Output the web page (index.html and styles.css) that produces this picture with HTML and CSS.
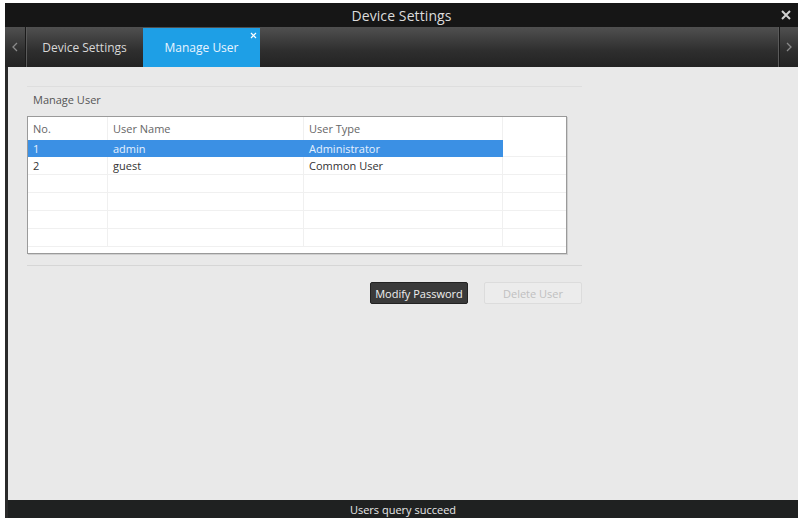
FILE: index.html
```html
<!DOCTYPE html>
<html>
<head>
<meta charset="utf-8">
<link rel="stylesheet" href="styles.css">
</head>
<body>
<div class="window">
  <div class="titlebar">
    <span class="title">Device Settings</span>
    <span class="close">
      <svg width="10" height="10" viewBox="0 0 10 10"><path d="M1 1L9 9M9 1L1 9" stroke="#d0d0d0" stroke-width="2"/></svg>
    </span>
  </div>
  <div class="tabbar">
    <div class="arrow left">
      <svg width="6" height="10" viewBox="0 0 6 10"><path d="M5 1L1 5L5 9" stroke="#8a8a8a" stroke-width="1.3" fill="none"/></svg>
    </div>
    <div class="tab">Device Settings</div>
    <div class="tab active">Manage User
      <span class="tabclose"><svg width="7" height="7" viewBox="0 0 7 7"><path d="M1 1L6 6M6 1L1 6" stroke="#fff" stroke-width="1.2"/></svg></span>
    </div>
    <div class="spacer"></div>
    <div class="arrow right">
      <svg width="6" height="10" viewBox="0 0 6 10"><path d="M1 1L5 5L1 9" stroke="#8a8a8a" stroke-width="1.3" fill="none"/></svg>
    </div>
  </div>
  <div class="content">
    <div class="group">
      <div class="group-label">Manage User</div>
      <div class="table">
        <div class="row head">
          <div class="cell c1">No.</div><div class="cell c2">User Name</div><div class="cell c3">User Type</div><div class="cell c4"></div>
        </div>
        <div class="row selected">
          <div class="cell c1">1</div><div class="cell c2">admin</div><div class="cell c3">Administrator</div><div class="cell c4"></div>
        </div>
        <div class="row strong">
          <div class="cell c1">2</div><div class="cell c2">guest</div><div class="cell c3">Common User</div><div class="cell c4"></div>
        </div>
        <div class="row"><div class="cell c1"></div><div class="cell c2"></div><div class="cell c3"></div><div class="cell c4"></div></div>
        <div class="row"><div class="cell c1"></div><div class="cell c2"></div><div class="cell c3"></div><div class="cell c4"></div></div>
        <div class="row"><div class="cell c1"></div><div class="cell c2"></div><div class="cell c3"></div><div class="cell c4"></div></div>
        <div class="row"><div class="cell c1"></div><div class="cell c2"></div><div class="cell c3"></div><div class="cell c4"></div></div>
      </div>
    </div>
    <div class="buttons">
      <button class="btn primary">Modify Password</button>
      <button class="btn disabled">Delete User</button>
    </div>
  </div>
  <div class="statusbar">Users query succeed</div>
</div>
</body>
</html>
```
FILE: styles.css
```css
html, body {
  margin: 0;
  padding: 0;
  background: #ffffff;
  overflow: hidden;
}
body {
  width: 798px;
  height: 518px;
}
.window {
  margin: 3px 0 0 5px;
  width: 793px;
  height: 515px;
  display: flex;
  flex-direction: column;
  font-family: "Open Sans", "Liberation Sans", sans-serif;
}
.titlebar {
  height: 24px;
  flex: none;
  background: #161616;
  display: flex;
  align-items: center;
  justify-content: center;
  position: relative;
}
.title {
  color: #dcdcdc;
  font-size: 14px;
  letter-spacing: 0.1px;
}
.close {
  position: absolute;
  right: 7px;
  top: 7px;
  line-height: 0;
}
.tabbar {
  height: 40px;
  flex: none;
  display: flex;
  background: linear-gradient(#505050, #2e2e2e 60%, #232323);
}
.arrow {
  display: flex;
  align-items: center;
  justify-content: center;
}
.arrow.left {
  width: 20px;
  border-right: 1px solid #1a1a1a;
  box-shadow: 1px 0 0 #5a5a5a;
}
.arrow.right {
  width: 18px;
  border-left: 1px solid #1a1a1a;
  box-shadow: -1px 0 0 #5a5a5a;
}
.spacer { flex: 1; }
.tab {
  width: 117px;
  display: flex;
  align-items: center;
  justify-content: center;
  font-size: 12px;
  color: #d8d8d8;
  position: relative;
}
.tab.active {
  background: #1e9fe6;
  color: #e8f4ff;
  margin-top: 1px;
}
.tabclose {
  position: absolute;
  right: 3px;
  top: 4px;
  line-height: 0;
}
.content {
  flex: 1;
  background: #e9e9e9;
  border-left: 3px solid #2a2a2a;
  padding: 19px 0 0 19px;
  display: flex;
  flex-direction: column;
}
.group {
  width: 555px;
  border-top: 1px solid #dedede;
  border-bottom: 1px solid #d6d6d6;
  padding-bottom: 11px;
  position: relative;
}
.group-label {
  font-size: 11px;
  color: #555;
  background: #e9e9e9;
  display: inline-block;
  padding: 0 5px 0 6px;
  margin-top: -8px;
  line-height: 16px;
}
.table {
  margin-top: 7px;
  width: 538px;
  height: 136px;
  overflow: hidden;
  background: #fff;
  border: 1px solid #9a9a9a;
  box-shadow: 1px 1px 0 #cfcfcf;
}
.row {
  display: flex;
  height: 18px;
  font-size: 11px;
  color: #666;
}
.row.head {
  height: 23px;
  color: #666;
}
.cell {
  border-right: 1px solid #f0f0f0;
  border-bottom: 1px solid #f0f0f0;
  box-sizing: border-box;
  padding-left: 5px;
  display: flex;
  align-items: center;
}
.row.head .cell { border-bottom: none; }
.c1 { width: 80px; }
.c2 { width: 196px; }
.c3 { width: 199px; }
.c4 { flex: 1; border-right: none; }
.row.selected .c1, .row.selected .c2, .row.selected .c3 {
  background: #3b90e4;
  color: #e6f1ff;
  border-color: #3b90e4;
}
.row.selected { height: 17px; }
.row.strong { color: #333; }
.buttons {
  width: 555px;
  display: flex;
  justify-content: flex-end;
  gap: 16px;
  margin-top: 16px;
}
.btn {
  width: 98px;
  height: 22px;
  font-family: "Open Sans", "Liberation Sans", sans-serif;
  font-size: 11px;
  border-radius: 2px;
  padding: 0;
}
.btn.primary {
  background: #3a3a3a;
  color: #f0f0f0;
  border: 1px solid #222;
}
.btn.disabled {
  background: #ececec;
  color: #c0c0c0;
  border: 1px solid #dcdcdc;
}
.statusbar {
  height: 18px;
  flex: none;
  background: #1f2121;
  border-left: 3px solid #2a2a2a;
  color: #e8e8e8;
  font-size: 11px;
  display: flex;
  align-items: center;
  justify-content: center;
}
```
